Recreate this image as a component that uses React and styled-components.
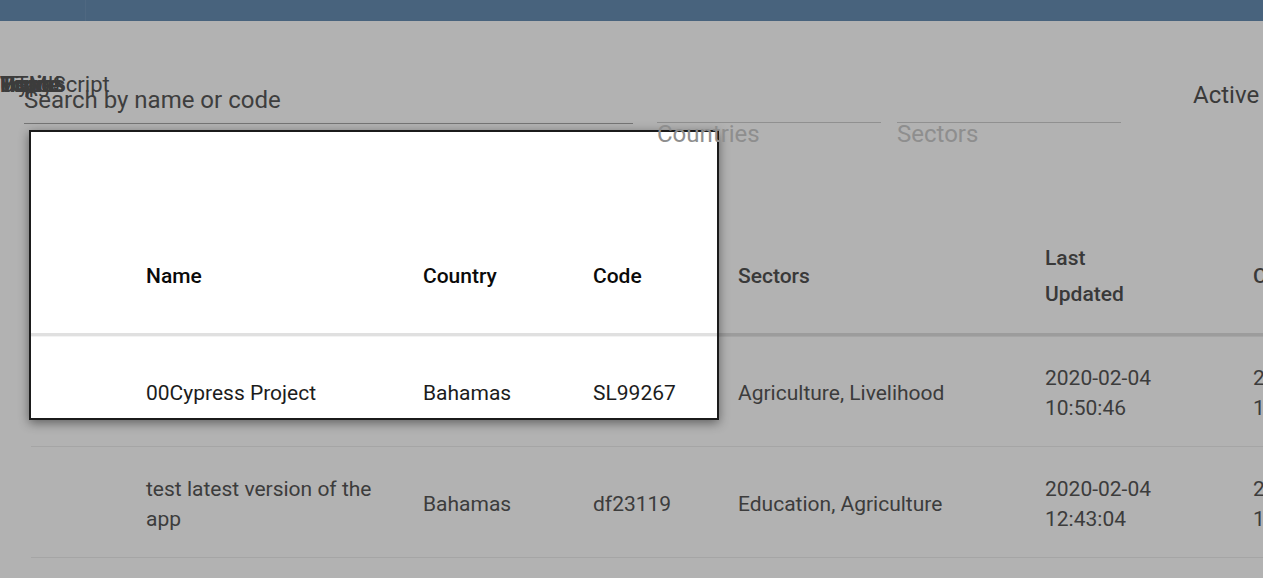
import React from 'react'
import styled, { createGlobalStyle } from 'styled-components'

const GlobalStyle = createGlobalStyle`
  html, body {
    margin: 0;
    background: #ffffff;
    font-family: Roboto, "Noto Sans", "Liberation Sans", sans-serif;
    overflow: hidden;
  }
`

// column layout shared by the page table and the tour highlight
const columns = [
  { key: 'blank', label: '', width: 115, pr: 0 },
  { key: 'name', label: 'Name', width: 277, pr: 30 },
  { key: 'country', label: 'Country', width: 170, pr: 16 },
  { key: 'code', label: 'Code', width: 145, pr: 16 },
  { key: 'sectors', label: 'Sectors', width: 307, pr: 16 },
  { key: 'updated', label: 'Last Updated', width: 208, pr: 93 },
  { key: 'created', label: 'Created', width: 208, pr: 93 },
]

const projects = [
  { name: '00Cypress Project', country: 'Bahamas', code: 'SL99267', sectors: 'Agriculture, Livelihood', updated: '2020-02-04 10:50:46', created: '2020-02-04 10:50:46' },
  { name: 'test latest version of the app', country: 'Bahamas', code: 'df23119', sectors: 'Education, Agriculture', updated: '2020-02-04 12:43:04', created: '2020-02-04 12:43:04' },
  { name: 'Sample project', country: 'Bahamas', code: 'AB10021', sectors: 'Health', updated: '2020-02-03 09:12:40', created: '2020-02-03 09:12:40' },
]

const ghostLabels = [
  { text: 'Topics', bold: true },
  { text: 'Home', bold: true },
  { text: 'Usage', bold: false },
  { text: 'Visual', bold: false },
  { text: 'HTML', bold: false },
]

function DataTable({ rows, $highlight }) {
  return (
    <Table>
      <HeaderRow $highlight={$highlight}>
        {columns.map((col) => (
          <HeadCell key={col.key} $pr={col.pr} $highlight={$highlight}>{col.label}</HeadCell>
        ))}
      </HeaderRow>
      {rows.map((row, idx) => (
        <BodyRow key={idx}>
          {columns.map((col) => (
            <BodyCell key={col.key} $pr={col.pr} $highlight={$highlight}>{row[col.key] || ''}</BodyCell>
          ))}
        </BodyRow>
      ))}
    </Table>
  )
}

function App() {
  return (
    <>
      <GlobalStyle />
      <Page>
        <TopBar>
          <Brand />
        </TopBar>

        <Filters>
          <SearchField>
            <GhostStack>
              {ghostLabels.map((g) => (
                <GhostLabel key={g.text} $bold={g.bold}>{g.text}</GhostLabel>
              ))}
              <GhostLabel $left={6}>TypeScript</GhostLabel>
            </GhostStack>
            <SearchInput placeholder="Search by name or code" />
          </SearchField>

          <SelectField $ml={24}>
            <SelectLine />
            <SelectLabel>Countries</SelectLabel>
          </SelectField>

          <SelectField $ml={16}>
            <SelectLine />
            <SelectLabel>Sectors</SelectLabel>
          </SelectField>

          <ActiveLabel>Active</ActiveLabel>
        </Filters>

        <TableWrap>
          <DataTable rows={projects} />
        </TableWrap>

        <Overlay />

        <Highlight>
          <HighlightInner>
            <DataTable rows={projects.slice(0, 1)} $highlight />
          </HighlightInner>
        </Highlight>
      </Page>
    </>
  )
}

const Page = styled.div`
  position: relative;
  width: 1263px;
  height: 578px;
  overflow: hidden;
`

const TopBar = styled.div`
  height: 21px;
  background-color: #678fb4;
  display: flex;
`

const Brand = styled.div`
  width: 85px;
  border-right: 1px solid rgba(255, 255, 255, 0.07);
`

const Filters = styled.div`
  display: flex;
  align-items: flex-start;
  height: 127px;
`

const SearchField = styled.div`
  position: relative;
  margin-left: 24px;
  margin-top: 65px;
  width: 609px;
`

const GhostStack = styled.div`
  position: absolute;
  left: -24px;
  top: -14px;
  width: 130px;
  height: 26px;
`

const GhostLabel = styled.span`
  position: absolute;
  top: 0;
  left: ${(p) => p.$left || 0}px;
  font-size: 22px;
  line-height: 26px;
  font-weight: ${(p) => (p.$bold ? 700 : 400)};
  color: #565656;
  white-space: nowrap;
`

const SearchInput = styled.input`
  display: block;
  box-sizing: content-box;
  width: 609px;
  height: 28px;
  padding: 0 0 9px 0;
  margin: 0;
  border: none;
  border-bottom: 1px solid #a8a8a8;
  background: transparent;
  font-family: Roboto, sans-serif;
  font-size: 24px;
  line-height: 28px;
  color: #5a5a5a;
  outline: none;
  &::placeholder {
    color: #5a5a5a;
    opacity: 1;
  }
`

const SelectField = styled.div`
  margin-left: ${(p) => p.$ml}px;
  margin-top: 101px;
  width: 224px;
  display: flex;
  flex-direction: column;
  align-items: flex-start;
`

const SelectLine = styled.div`
  align-self: stretch;
  height: 1px;
  background-color: #cfcfcf;
`

// the label sits above the tour overlay, as in the captured page
const SelectLabel = styled.div`
  position: relative;
  z-index: 12;
  margin-top: -3px;
  font-size: 24px;
  line-height: 28px;
  color: #8e8e8e;
`

const ActiveLabel = styled.div`
  margin-left: 72px;
  margin-top: 60px;
  font-size: 24px;
  line-height: 28px;
  color: #545454;
`

const TableWrap = styled.div`
  margin-top: 71px;
  margin-left: 31px;
`

const Table = styled.div`
  width: ${columns.reduce((s, c) => s + c.width, 0)}px;
`

const gridTemplate = columns.map((c) => `${c.width}px`).join(' ')

const HeaderRow = styled.div`
  display: grid;
  grid-template-columns: ${gridTemplate};
  align-items: center;
  border-bottom: 3px solid #e0e0e0;
  box-shadow: 0 1px 0 ${(p) => (p.$highlight ? '#f3f3f3' : '#ececec')};
`

const HeadCell = styled.div`
  padding: 21px ${(p) => p.$pr}px 21px 0;
  font-size: 21px;
  line-height: 36px;
  font-weight: 500;
  color: ${(p) => (p.$highlight ? '#0a0a0a' : '#525252')};
`

const BodyRow = styled.div`
  display: grid;
  grid-template-columns: ${gridTemplate};
  align-items: center;
  border-bottom: 1px solid #ececec;
`

const BodyCell = styled.div`
  padding: 27px ${(p) => p.$pr}px 23px 0;
  font-size: 21px;
  line-height: 30px;
  color: ${(p) => (p.$highlight ? '#1c1c1c' : '#575757')};
`

const Overlay = styled.div`
  position: absolute;
  inset: 0;
  background-color: rgba(0, 0, 0, 0.3);
  z-index: 10;
`

const Highlight = styled.div`
  position: absolute;
  left: 29px;
  top: 130px;
  width: 690px;
  height: 290px;
  box-sizing: border-box;
  border: 2px solid #1b1b1b;
  background-color: #ffffff;
  box-shadow: 0 3px 10px rgba(0, 0, 0, 0.45);
  overflow: hidden;
  z-index: 11;
`

const HighlightInner = styled.div`
  margin-top: 87px;
`

export default App
